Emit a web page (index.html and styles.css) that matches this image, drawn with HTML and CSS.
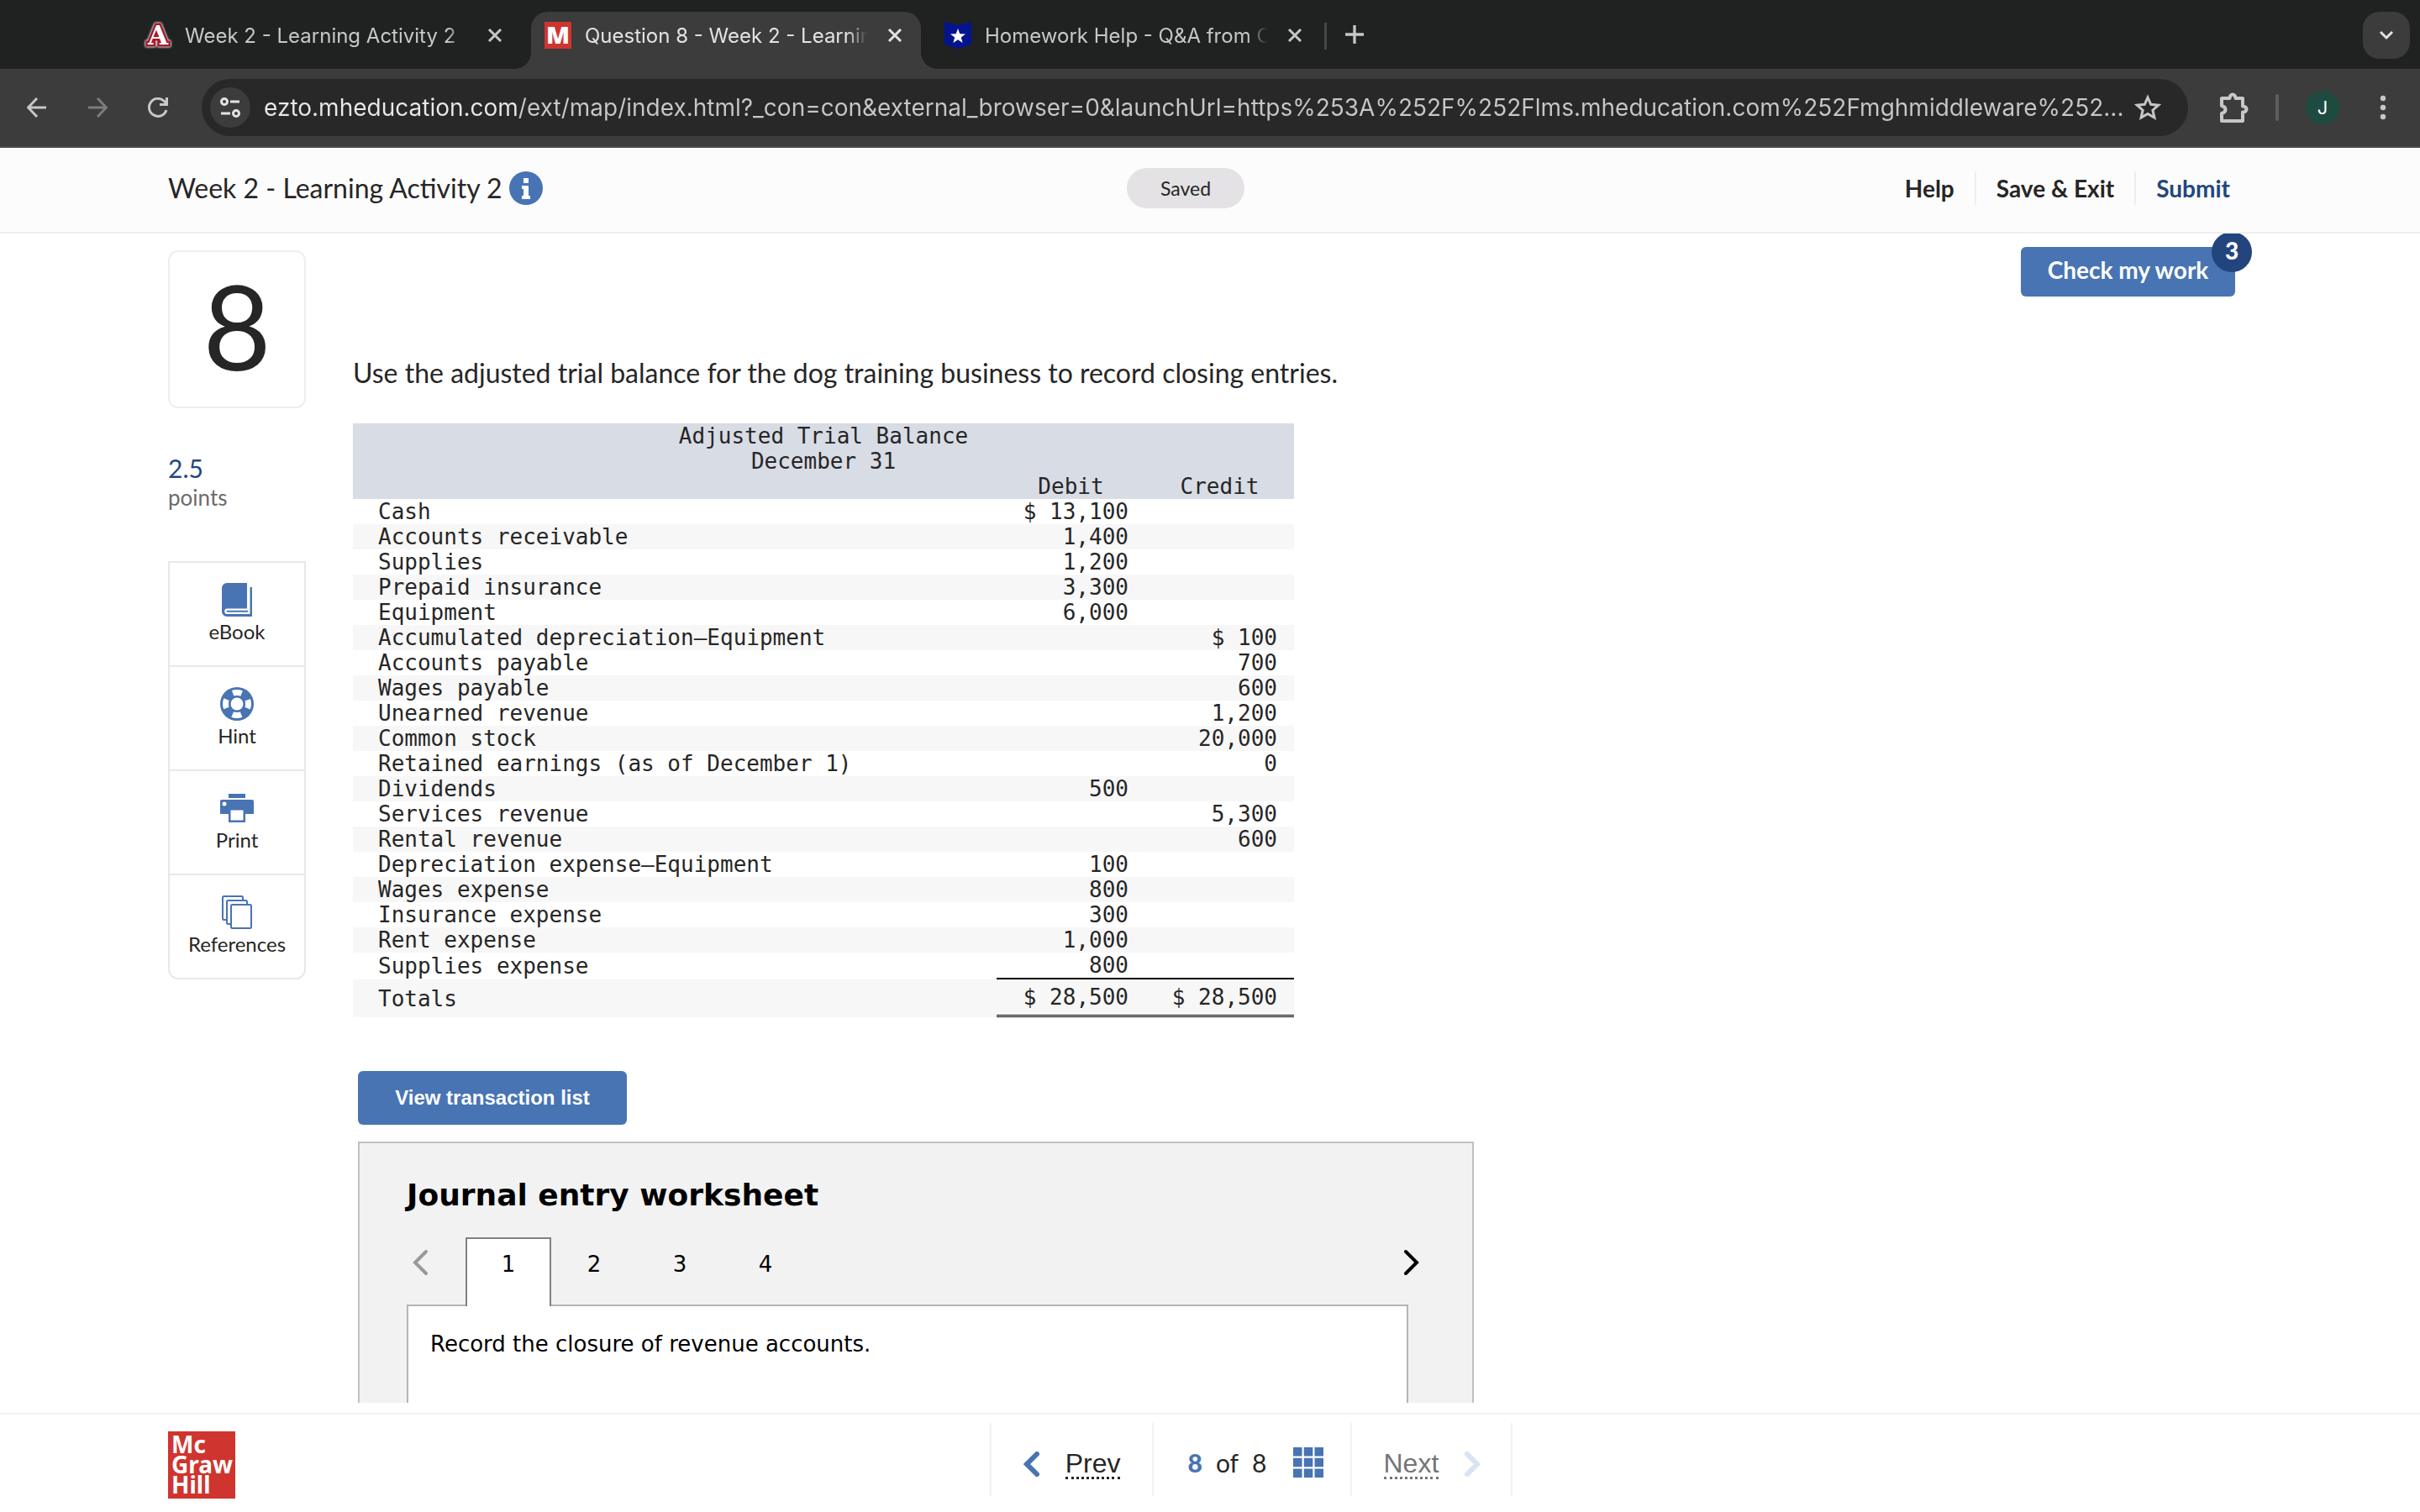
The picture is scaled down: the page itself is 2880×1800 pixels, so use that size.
FILE: index.html
```html
<!DOCTYPE html>
<html lang="en">
<head>
    <meta charset="UTF-8">
    <meta name="viewport" content="width=device-width, initial-scale=1.0">
    <title>Question 8 - Week 2 - Learning Activity 2</title>
    <link rel="stylesheet" href="styles.css">
</head>
<body>
    <!-- Browser window -->
    <div class="tab-strip">
        <div class="tab">
            <svg class="tab-icon" viewBox="0 0 32 32">
                <text class="az-letter" x="16" y="27" text-anchor="middle">A</text>
            </svg>
            <span class="tab-title">Week 2 - Learning Activity 2</span>
            <button class="tab-close" aria-label="Close tab"><svg viewBox="0 0 18 18"><path d="M2 2l14 14M16 2L2 16"/></svg></button>
        </div>
        <div class="tab active">
            <svg class="tab-icon" viewBox="0 0 32 32">
                <rect width="32" height="32" fill="#d0342f"/>
                <text class="mh-letter" x="16" y="26" text-anchor="middle">M</text>
            </svg>
            <span class="tab-title">Question 8 - Week 2 - Learning Activity 2</span>
            <button class="tab-close" aria-label="Close tab"><svg viewBox="0 0 18 18"><path d="M2 2l14 14M16 2L2 16"/></svg></button>
        </div>
        <div class="tab">
            <svg class="tab-icon" viewBox="0 0 32 32">
                <path d="M0 0l16 4 16-4v27l-16 5-16-5z" fill="#04148f"/>
                <path d="M16 8l2.3 6.2 6.700.3-5.200 4.100 1.800 6.400L16 21.300 10.400 25l1.800-6.400L7 14.500l6.700-.3z" fill="#fff"/>
            </svg>
            <span class="tab-title">Homework Help - Q&amp;A from Online Tutors</span>
            <button class="tab-close" aria-label="Close tab"><svg viewBox="0 0 18 18"><path d="M2 2l14 14M16 2L2 16"/></svg></button>
        </div>
        <span class="tab-divider"></span>
        <button class="new-tab" aria-label="New tab"><svg viewBox="0 0 20 20"><path d="M10 0v20M0 10h20"/></svg></button>
        <button class="tab-search" aria-label="Search tabs"><svg viewBox="0 0 18 12"><path d="M2 2l7 7 7-7"/></svg></button>
    </div>

    <div class="toolbar">
        <button class="tool" aria-label="Back"><svg viewBox="0 0 24 24"><path d="M23 12H2M12 1L1.500 12 12 23"/></svg></button>
        <button class="tool dim" aria-label="Forward"><svg viewBox="0 0 24 24"><path d="M1 12h21M12 1l10.500 11L12 23"/></svg></button>
        <button class="tool" aria-label="Reload"><svg viewBox="0 0 24 24"><path d="M22 15a10.500 10.500 0 1 1-2.500-10.500L22.500 8M22.500 0v8.500H14"/></svg></button>
        <div class="omnibox">
            <button class="site-info" aria-label="Site information">
                <svg viewBox="0 0 24 24"><circle cx="5" cy="5" r="3.500"/><path d="M12 5h11M1 19h11"/><circle cx="19" cy="19" r="3.500"/></svg>
            </button>
            <input class="url" type="text" aria-label="Address" value="ezto.mheducation.com/ext/map/index.html?_con=con&amp;external_browser=0&amp;launchUrl=https%253A%252F%252Flms.mheducation.com%252Fmghmiddleware%252...">
            <button class="bookmark" aria-label="Bookmark this page">
                <svg viewBox="0 0 32 32"><path d="M16 4l3.700 8.300 9 .9-6.800 6 2 8.800L16 23.400 8.100 28l2-8.800-6.800-6 9-.9z"/></svg>
            </button>
        </div>
        <button class="extensions" aria-label="Extensions">
            <svg viewBox="0 0 36 36"><path d="M4 7h9.500c0-6 7-6 7 0H29v9.500c6 0 6 7 0 7V34H4v-9c6-1.500 6-7.500 0-9z"/></svg>
        </button>
        <span class="tool-divider"></span>
        <button class="avatar">J</button>
        <button class="menu" aria-label="Menu"><svg viewBox="0 0 8 32"><circle cx="4" cy="5" r="3.200"/><circle cx="4" cy="16" r="3.200"/><circle cx="4" cy="27" r="3.200"/></svg></button>
    </div>

    <!-- Assignment header -->
    <header class="header">
        <div class="header-left">
            <h1>Week 2 - Learning Activity 2</h1>
            <button class="info" aria-label="Assignment information">
                <svg viewBox="0 0 40 40"><circle cx="20" cy="20" r="20"/><path fill="#fff" d="M17 8h6v6h-6zM15 17h8v12h2v4H15v-4h2v-8h-2z"/></svg>
            </button>
        </div>
        <span class="saved">Saved</span>
        <nav class="header-nav">
            <a href="#">Help</a>
            <a href="#">Save &amp; Exit</a>
            <a href="#" class="submit">Submit</a>
        </nav>
    </header>

    <main class="main">
        <aside class="sidebar">
            <div class="question-number">8</div>
            <div class="points"><strong>2.5</strong><span>points</span></div>
            <div class="resources">
                <button>
                    <svg viewBox="0 0 40 40"><path d="M2 6a6 6 0 0 1 6-6h24v5h6v35H8a6 6 0 0 1-6-6z"/><path fill="#fff" d="M32 0h3.500v37H8.500a3.200 3.200 0 0 1 0-6.500H32z"/><path d="M8.500 32.700H33v2H8.500a1 1 0 0 1 0-2z"/></svg>
                    eBook
                </button>
                <button>
                    <svg viewBox="0 0 40 40"><circle cx="20" cy="20" r="20"/><circle class="ring" cx="20" cy="20" r="13.500"/><circle cx="20" cy="20" r="10"/><circle cx="20" cy="20" r="7.500" fill="#fff"/></svg>
                    Hint
                </button>
                <button>
                    <svg viewBox="0 0 40 40"><path d="M10 3h20v5H10zM2 10h36a2 2 0 0 1 2 2v15H30v10H10V27H0V12a2 2 0 0 1 2-2z"/><circle cx="5" cy="15" r="2.500" fill="#fff"/><path d="M12.500 22.500h15v12h-15z" fill="#fff"/></svg>
                    Print
                </button>
                <button>
                    <svg viewBox="0 0 40 40" class="outline"><rect x="3" y="1" width="24" height="28" rx="1.500"/><rect x="8" y="6" width="24" height="28" rx="1.500"/><rect x="13" y="11" width="24" height="28" rx="1.500"/></svg>
                    References
                </button>
            </div>
        </aside>

        <section class="question">
            <p class="intro">Use the adjusted trial balance for the dog training business to record closing entries.</p>

            <table class="balance">
                <thead>
                    <tr><th colspan="3">Adjusted Trial Balance</th></tr>
                    <tr><th colspan="3">December 31</th></tr>
                    <tr><th></th><th class="amount-col">Debit</th><th class="amount-col">Credit</th></tr>
                </thead>
                <tbody>
                    <tr><td>Cash</td><td>$ 13,100</td><td></td></tr>
                    <tr><td>Accounts receivable</td><td>1,400</td><td></td></tr>
                    <tr><td>Supplies</td><td>1,200</td><td></td></tr>
                    <tr><td>Prepaid insurance</td><td>3,300</td><td></td></tr>
                    <tr><td>Equipment</td><td>6,000</td><td></td></tr>
                    <tr><td>Accumulated depreciation—Equipment</td><td></td><td>$ 100</td></tr>
                    <tr><td>Accounts payable</td><td></td><td>700</td></tr>
                    <tr><td>Wages payable</td><td></td><td>600</td></tr>
                    <tr><td>Unearned revenue</td><td></td><td>1,200</td></tr>
                    <tr><td>Common stock</td><td></td><td>20,000</td></tr>
                    <tr><td>Retained earnings (as of December 1)</td><td></td><td>0</td></tr>
                    <tr><td>Dividends</td><td>500</td><td></td></tr>
                    <tr><td>Services revenue</td><td></td><td>5,300</td></tr>
                    <tr><td>Rental revenue</td><td></td><td>600</td></tr>
                    <tr><td>Depreciation expense—Equipment</td><td>100</td><td></td></tr>
                    <tr><td>Wages expense</td><td>800</td><td></td></tr>
                    <tr><td>Insurance expense</td><td>300</td><td></td></tr>
                    <tr><td>Rent expense</td><td>1,000</td><td></td></tr>
                    <tr class="last"><td>Supplies expense</td><td>800</td><td></td></tr>
                    <tr class="totals"><td>Totals</td><td>$ 28,500</td><td>$ 28,500</td></tr>
                </tbody>
            </table>

            <div class="worksheet-area">
                <button class="view-list">View transaction list</button>
                <div class="worksheet">
                    <h2>Journal entry worksheet</h2>
                    <div class="steps">
                        <button class="arrow prev-arrow" aria-label="Previous entry"><svg viewBox="0 0 20 32"><path d="M17 3L4 16l13 13"/></svg></button>
                        <button class="step current">1</button>
                        <button class="step">2</button>
                        <button class="step">3</button>
                        <button class="step">4</button>
                        <button class="arrow next-arrow" aria-label="Next entry"><svg viewBox="0 0 20 32"><path d="M3 3l13 13L3 29"/></svg></button>
                    </div>
                    <div class="entry">Record the closure of revenue accounts.</div>
                </div>
            </div>
        </section>

        <div class="check">
            <button class="check-button">Check my work</button>
            <span class="badge">3</span>
        </div>
    </main>

    <footer class="footer">
        <div class="logo">Mc<br>Graw<br>Hill</div>
        <nav class="pager">
            <a href="#" class="pager-cell">
                <svg viewBox="0 0 20 30"><path d="M16 3L4 15l12 12"/></svg>
                <span>Prev</span>
            </a>
            <div class="pager-cell count">
                <strong>8</strong> <span>of</span> <span>8</span>
                <button class="grid" aria-label="All questions">
                    <svg viewBox="0 0 36 36"><path d="M0 0h10.500v10.500H0zM12.800 0h10.500v10.500H12.800zM25.500 0H36v10.500H25.500zM0 12.800h10.500v10.500H0zM12.800 12.800h10.500v10.500H12.800zM25.500 12.800H36v10.500H25.500zM0 25.500h10.500V36H0zM12.800 25.500h10.500V36H12.800zM25.500 25.500H36V36H25.500z"/></svg>
                </button>
            </div>
            <a href="#" class="pager-cell disabled">
                <span>Next</span>
                <svg viewBox="0 0 20 30"><path d="M4 3l12 12L4 27"/></svg>
            </a>
        </nav>
    </footer>
</body>
</html>
```

FILE: styles.css
```css
* {
    box-sizing: border-box;
}

body {
    margin: 0;
    height: 100vh;
    display: flex;
    flex-direction: column;
    overflow: hidden;
    background: #fff;
    color: #262626;
    font-family: Lato, sans-serif;
}

button {
    margin: 0;
    padding: 0;
    border: none;
    background: none;
    color: inherit;
    font: inherit;
    cursor: pointer;
}

svg {
    display: block;
    flex-shrink: 0;
}

a {
    color: inherit;
    text-decoration: none;
}

/* Browser tabs */
.tab-strip {
    display: flex;
    flex-shrink: 0;
    align-items: flex-start;
    height: 82px;
    padding: 14px 12px 0 156px;
    background: #202221;
    color: #c7c7c7;
    font-family: Inter, sans-serif;
    font-size: 24px;
}

.tab {
    position: relative;
    display: flex;
    align-items: center;
    width: 464px;
    height: 68px;
    margin-right: 12px;
    padding: 0 22px 12px 16px;
}

.tab.active {
    background: #3c3c3c;
    border-radius: 20px 20px 0 0;
    color: #e3e3e3;
}

.tab.active::before,
.tab.active::after {
    content: "";
    position: absolute;
    bottom: 0;
    width: 20px;
    height: 20px;
}

.tab.active::before {
    left: -20px;
    background: radial-gradient(circle at 0 0, transparent 20px, #3c3c3c 20px);
}

.tab.active::after {
    right: -20px;
    background: radial-gradient(circle at 100% 0, transparent 20px, #3c3c3c 20px);
}

.tab-icon {
    width: 32px;
    height: 32px;
    margin-right: 16px;
    overflow: visible;
}

.az-letter {
    fill: #fff;
    stroke: #ab1a2d;
    stroke-width: 5;
    paint-order: stroke;
    filter: drop-shadow(0 0 1px #d9dde0) drop-shadow(0 0 1px #d9dde0);
    font-family: "DejaVu Serif", serif;
    font-weight: bold;
    font-size: 31px;
}

.mh-letter {
    fill: #fff;
    font-family: "Open Sans", sans-serif;
    font-weight: 800;
    font-size: 29px;
}

.tab-title {
    flex: 1;
    min-width: 0;
    margin-right: 24px;
    overflow: hidden;
    white-space: nowrap;
    mask-image: linear-gradient(90deg, #000 calc(100% - 24px), transparent);
}

.tab-close svg {
    width: 18px;
    height: 18px;
    fill: none;
    stroke: currentColor;
    stroke-width: 3;
}

.tab-divider {
    width: 3px;
    height: 32px;
    margin: 13px 22px 0 -8px;
    background: #464746;
}

.new-tab {
    margin-top: 16px;
}

.new-tab svg {
    width: 22px;
    height: 22px;
    stroke: currentColor;
    stroke-width: 3;
}

.tab-search {
    display: flex;
    align-items: center;
    justify-content: center;
    width: 56px;
    height: 56px;
    margin-left: auto;
    border-radius: 20px;
    background: #3c3c3c;
    color: #e3e3e3;
}

.tab-search svg {
    width: 18px;
    height: 12px;
    fill: none;
    stroke: currentColor;
    stroke-width: 3;
}

/* Browser toolbar */
.toolbar {
    display: flex;
    flex-shrink: 0;
    align-items: center;
    height: 94px;
    padding: 0 40px 0 32px;
    border-bottom: 2px solid #4a4a4a;
    background: #3c3c3c;
    color: #c7c7c7;
    font-family: Inter, sans-serif;
}

.tool {
    margin-right: 48px;
}

.tool svg {
    width: 24px;
    height: 24px;
    fill: none;
    stroke: currentColor;
    stroke-width: 3;
}

.tool.dim {
    color: #7c7c7c;
}

.omnibox {
    display: flex;
    flex: 1;
    align-items: center;
    height: 68px;
    margin: 0 36px 0 -8px;
    padding: 0 32px 0 10px;
    border-radius: 34px;
    background: #282828;
}

.site-info {
    display: flex;
    align-items: center;
    justify-content: center;
    width: 48px;
    height: 48px;
    border-radius: 50%;
    background: #3c3c3c;
    color: #e3e3e3;
}

.site-info svg {
    width: 24px;
    height: 24px;
    fill: none;
    stroke: currentColor;
    stroke-width: 3;
}

.url {
    flex: 1;
    min-width: 0;
    padding: 0 0 0 16px;
    border: none;
    outline: none;
    /* host is brighter than the rest of the address */
    background: linear-gradient(90deg, #e9e9e9 318px, #c7c7c7 318px);
    background-clip: text;
    color: transparent;
    font-family: Inter, sans-serif;
    font-size: 28px;
    line-height: 40px;
}

.bookmark svg {
    width: 32px;
    height: 32px;
    fill: none;
    stroke: #c7c7c7;
    stroke-width: 3;
}

.extensions svg {
    width: 36px;
    height: 36px;
    fill: none;
    stroke: currentColor;
    stroke-width: 4;
    stroke-linejoin: round;
}

.tool-divider {
    width: 4px;
    height: 32px;
    margin: 0 32px;
    border-radius: 2px;
    background: #5e5e5e;
}

.avatar {
    width: 40px;
    height: 40px;
    margin-right: 48px;
    border-radius: 50%;
    background: #1d4b40;
    color: #fff;
    font-size: 22px;
}

.menu svg {
    width: 8px;
    height: 32px;
    fill: currentColor;
}

/* Assignment header */
.header {
    display: grid;
    grid-template-columns: 1fr auto 1fr;
    flex-shrink: 0;
    align-items: center;
    height: 102px;
    padding: 0 220px 5px 200px;
    border-bottom: 2px solid #eee;
    background: #fcfcfc;
}

.header-left {
    display: flex;
    align-items: center;
    gap: 8px;
}

.header h1 {
    margin: 0;
    font-size: 32px;
    font-weight: normal;
    line-height: 40px;
}

.info svg {
    width: 40px;
    height: 40px;
    fill: #4874b4;
}

.saved {
    width: 140px;
    margin-right: 38px;
    border-radius: 24px;
    background: #e4e2e5;
    font-size: 23px;
    line-height: 48px;
    text-align: center;
}

.header-nav {
    display: flex;
    justify-content: flex-end;
    font-size: 28px;
    font-weight: bold;
    line-height: 40px;
}

.header-nav a {
    padding: 0 24px;
    border-right: 2px solid #eee;
}

.header-nav .submit {
    padding-right: 6px;
    border-right: none;
    color: #1f477f;
}

/* Question */
.main {
    display: flex;
    flex: 1;
    align-items: flex-start;
    min-height: 0;
    padding: 16px 220px 0 200px;
    overflow: hidden;
}

.sidebar {
    flex-shrink: 0;
    width: 164px;
    margin-right: 56px;
    padding-top: 4px;
}

.question-number {
    height: 188px;
    border: 2px solid #eee;
    border-radius: 12px;
    font-size: 140px;
    line-height: 174px;
    text-align: center;
}

.points {
    display: flex;
    flex-direction: column;
    margin: 54px 0 58px;
    color: #6b6b6b;
    font-size: 26px;
    line-height: 35px;
}

.points strong {
    color: #1f477f;
    font-size: 30px;
    font-weight: normal;
}

.resources {
    display: flex;
    flex-direction: column;
    border: 2px solid #e8e8e8;
    border-radius: 0 0 12px 12px;
}

.resources button {
    display: flex;
    flex-direction: column;
    align-items: center;
    gap: 3px;
    height: 124px;
    padding-top: 24px;
    border-bottom: 2px solid #e8e8e8;
    font-size: 24px;
    line-height: 30px;
}

.resources button:last-child {
    height: 122px;
    border-bottom: none;
}

.resources svg {
    width: 40px;
    height: 40px;
    fill: #4874b4;
}

.resources .outline {
    fill: #fff;
    stroke: #4874b4;
    stroke-width: 2;
}

.resources .ring {
    fill: none;
    stroke: #fff;
    stroke-width: 7;
    stroke-dasharray: 10.600 10.600;
    stroke-dashoffset: 5.300;
}

.question {
    flex: 1;
    min-width: 0;
    padding-top: 130px;
}

.intro {
    margin: 0 0 40px;
    font-size: 32px;
    line-height: 40px;
}

.balance {
    width: 1120px;
    border-collapse: separate;
    border-spacing: 0;
    font-family: "DejaVu Sans Mono", monospace;
    font-size: 26px;
    line-height: 30px;
}

.balance th {
    height: 30px;
    padding: 0;
    background: #d8dce5;
    font-weight: normal;
}

.balance .amount-col {
    width: 177px;
}

.balance td {
    height: 30px;
    padding: 0 20px 0 0;
    text-align: right;
}

.balance td:first-child {
    padding-left: 30px;
    text-align: left;
}

.balance tbody tr:nth-child(even) {
    background: #f7f7f7;
}

.balance .last td:not(:first-child) {
    border-bottom: 2px solid #000;
}

.balance .totals td {
    height: 45px;
}

.balance .totals td:not(:first-child) {
    border-bottom: 3px double #000;
}

.worksheet-area {
    width: 1328px;
    margin: 64px 0 0 6px;
}

.view-list {
    width: 320px;
    height: 64px;
    border-radius: 6px;
    background: #4874b4;
    color: #fff;
    font-family: "Liberation Sans", Arial, sans-serif;
    font-size: 24px;
    font-weight: bold;
}

.worksheet {
    margin-top: 20px;
    padding: 40px 76px 0 56px;
    border: 2px solid #c1c1c1;
    background: #f2f2f2;
    color: #000;
    font-family: Verdana, "DejaVu Sans", sans-serif;
    font-size: 26px;
}

.worksheet h2 {
    margin: 0 0 28px;
    font-size: 36px;
    line-height: 44px;
}

.steps {
    position: relative;
    display: flex;
    padding-left: 70px;
}

.step {
    width: 102px;
    height: 80px;
    padding-bottom: 18px;
    border: 2px solid transparent;
    border-bottom: none;
}

.step.current {
    height: 82px;
    margin-bottom: -2px;
    padding-bottom: 20px;
    border-color: #808080;
    background: #fff;
    z-index: 1;
}

.arrow {
    position: absolute;
    top: 14px;
}

.arrow svg {
    width: 20px;
    height: 32px;
    fill: none;
    stroke: currentColor;
    stroke-width: 4;
    stroke-linecap: round;
}

.prev-arrow {
    left: 6px;
    color: #999;
}

.next-arrow {
    right: -14px;
}

.entry {
    height: 300px;
    padding: 27px 26px;
    border: 2px solid #b5b5b5;
    background: #fff;
    line-height: 36px;
}

.check {
    position: relative;
    flex-shrink: 0;
}

.check-button {
    width: 255px;
    height: 59px;
    padding-bottom: 6px;
    border-radius: 6px;
    background: #4874b4;
    color: #fff;
    font-size: 28px;
    font-weight: bold;
}

.badge {
    position: absolute;
    top: -18px;
    right: -20px;
    width: 48px;
    height: 48px;
    border-radius: 50%;
    background: #23457e;
    color: #fff;
    font-size: 28px;
    font-weight: 900;
    line-height: 44px;
    text-align: center;
}

/* Footer */
.footer {
    position: relative;
    display: flex;
    flex-shrink: 0;
    justify-content: center;
    height: 118px;
    margin-top: 12px;
    padding: 10px 0 19px;
    border-top: 2px solid #f2f2f2;
    background: #fff;
}

.logo {
    position: absolute;
    top: 20px;
    left: 200px;
    width: 80px;
    height: 80px;
    padding: 3px 4px;
    background: #d0342f;
    color: #fff;
    font-family: "Noto Sans", sans-serif;
    font-size: 28px;
    font-weight: bold;
    line-height: 24px;
}

.pager {
    display: flex;
    margin-left: 98px;
    border-left: 2px solid #f2f2f2;
    font-family: "Liberation Sans", Arial, sans-serif;
}

.pager-cell {
    display: flex;
    align-items: center;
    gap: 30px;
    padding: 0 38px;
    border-right: 2px solid #f2f2f2;
    font-size: 32px;
}

.pager-cell > svg {
    width: 20px;
    height: 30px;
    margin-bottom: -10px;
    fill: none;
    stroke: #4874b4;
    stroke-width: 6;
    stroke-linecap: round;
}

a.pager-cell span {
    margin-top: 12px;
    border-bottom: 3px dotted currentColor;
    line-height: 32px;
}

.count {
    gap: 16px;
    padding: 6px 32px 0 40px;
    font-family: Lato, sans-serif;
    font-size: 30px;
}

.count strong {
    color: #4874b4;
    font-weight: 900;
}

.grid {
    margin-left: 15px;
}

.grid svg {
    width: 36px;
    height: 36px;
    fill: #4874b4;
}

.pager .disabled {
    padding-right: 36px;
    color: #757575;
}

.disabled svg {
    stroke: #d9e3f1;
}
```
